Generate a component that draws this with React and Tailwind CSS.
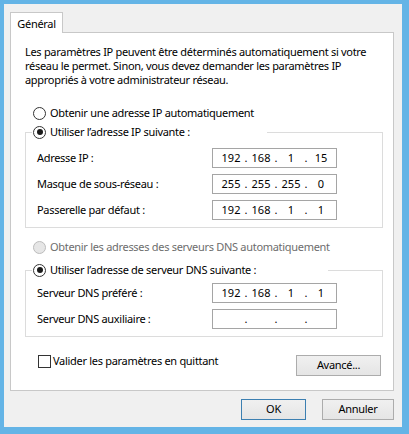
import React from "react";

function Radio({ checked, disabled }) {
  return (
    <span
      className={`w-[13px] h-[13px] rounded-full border flex items-center justify-center shrink-0 ${
        disabled ? "border-[#bcbcbc] bg-[#e6e6e6]" : "border-[#333333] bg-white"
      }`}
    >
      {checked && <span className="w-[6px] h-[6px] rounded-full bg-[#1a1a1a]" />}
    </span>
  );
}

function IpField({ parts }) {
  return (
    <div className="w-[125px] h-[20px] border border-[#a5a5a5] bg-white flex items-center pl-[6px] tracking-normal">
      {parts.map((p, i) => (
        <React.Fragment key={i}>
          <span className="w-[24px] text-center">{p}</span>
          {i < 3 && <span className="w-[6px] text-center">.</span>}
        </React.Fragment>
      ))}
    </div>
  );
}

function Row({ label, parts }) {
  return (
    <div className="flex items-center h-[20px]">
      <span className="w-[175px]">{label}</span>
      <IpField parts={parts} />
    </div>
  );
}

function Button({ children, w, primary }) {
  return (
    <button
      className={`${w} h-[21px] border ${
        primary ? "border-[#3c7fb1]" : "border-[#acacac]"
      } bg-gradient-to-b from-[#f0f0f0] to-[#e5e5e5] flex items-center justify-center text-black`}
    >
      {children}
    </button>
  );
}

export default function App() {
  return (
    <div
      className="w-[409px] h-[434px] bg-[#64b4e6] pt-[4px] pl-[4px] pr-[7px] pb-[7px] text-[11px] tracking-[-0.3px] text-black"
      style={{ fontFamily: '"Noto Sans", sans-serif' }}
    >
      <div className="w-[398px] h-[423px] bg-[#f0f0f0] pl-[6px] pt-[8px] flex flex-col">
        <div className="h-[21px] flex">
          <div className="relative z-10 w-[53px] h-[21px] bg-white border border-b-0 border-[#c8c8c8] flex items-center justify-center leading-none">
            Général
          </div>
        </div>
        <div className="w-[384px] h-[359px] -mt-[1px] bg-white border border-[#c8c8c8] pl-[14px] pt-[12px] flex flex-col">
          <p className="leading-[14px] whitespace-nowrap">
            Les paramètres IP peuvent être déterminés automatiquement si votre
            <br />
            réseau le permet. Sinon, vous devez demander les paramètres IP
            <br />
            appropriés à votre administrateur réseau.
          </p>

          <div className="mt-[18px] h-[16px] flex items-center pl-[8px] gap-[4px]">
            <Radio />
            <span>Obtenir une adresse IP automatiquement</span>
          </div>

          <fieldset className="mt-[3px] w-[358px] border border-[#dcdcdc] pl-[11px] pt-[8px] pb-[7px]">
            <legend className="-ml-[5px] w-[235px] h-[16px] pl-[1px]">
              <div className="flex items-center gap-[4px] h-[16px]">
                <Radio checked />
                <span>Utiliser l’adresse IP suivante :</span>
              </div>
            </legend>
            <div className="flex flex-col gap-[6px]">
              <Row label="Adresse IP :" parts={["192", "168", "1", "15"]} />
              <Row label="Masque de sous-réseau :" parts={["255", "255", "255", "0"]} />
              <Row label="Passerelle par défaut :" parts={["192", "168", "1", "1"]} />
            </div>
          </fieldset>

          <div className="mt-[11px] h-[16px] flex items-center pl-[8px] gap-[4px] text-[#6d6d6d]">
            <Radio disabled />
            <span>Obtenir les adresses des serveurs DNS automatiquement</span>
          </div>

          <fieldset className="mt-[7px] w-[358px] border border-[#dcdcdc] pl-[11px] pt-[5px] pb-[7px]">
            <legend className="-ml-[5px] w-[296px] h-[16px] pl-[1px]">
              <div className="flex items-center gap-[4px] h-[16px]">
                <Radio checked />
                <span>Utiliser l’adresse de serveur DNS suivante :</span>
              </div>
            </legend>
            <div className="flex flex-col gap-[6px]">
              <Row label="Serveur DNS préféré :" parts={["192", "168", "1", "1"]} />
              <Row label="Serveur DNS auxiliaire :" parts={["", "", "", ""]} />
            </div>
          </fieldset>

          <div className="mt-[18px] w-[356px] flex items-start">
            <div className="flex items-center gap-[2px] pl-[13px] mt-[-1px] h-[15px]">
              <span className="w-[13px] h-[13px] border border-[#333333] bg-white shrink-0" />
              <span>Valider les paramètres en quittant</span>
            </div>
            <div className="ml-auto">
              <Button w="w-[85px]">Avancé...</Button>
            </div>
          </div>
        </div>
        <div className="mt-[8px] w-[384px] flex justify-end gap-[16px]">
          <Button w="w-[65px]" primary>
            OK
          </Button>
          <Button w="w-[72px]">Annuler</Button>
        </div>
      </div>
    </div>
  );
}
